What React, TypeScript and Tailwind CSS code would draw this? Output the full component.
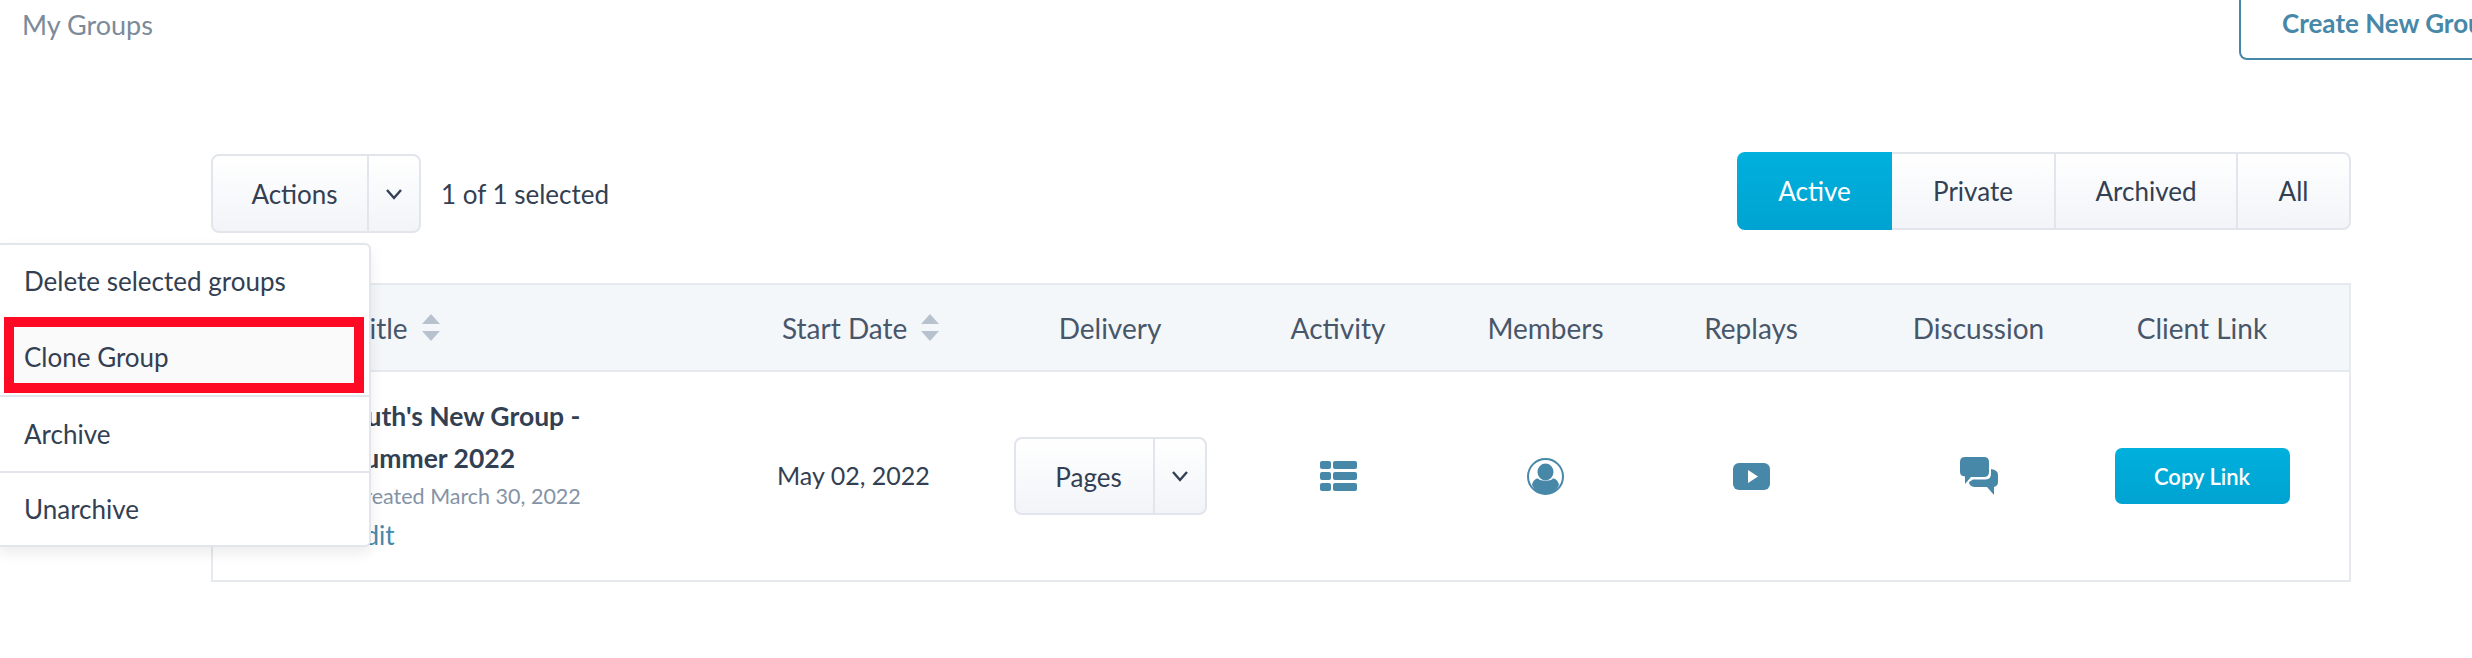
import React from "react";

const Chevron = () => (
  <svg width="18" height="12" viewBox="0 0 18 12" fill="none" stroke="#333f52" strokeWidth="2.4">
    <path d="M2 2 L9 10 L16 2" />
  </svg>
);

const Sort = () => (
  <svg width="18" height="27" viewBox="0 0 18 27" fill="#b8c2ce" className="ml-[14px]">
    <path d="M9 0 L18 10 L0 10 Z" />
    <path d="M0 17 L18 17 L9 27 Z" />
  </svg>
);

const SplitButton = ({ label, w, h, arrowW }: { label: string; w: number; h: number; arrowW: number }) => (
  <div
    className="flex rounded-[8px] border-2 border-[#e2e5eb] bg-gradient-to-b from-white to-[#f2f4f8] text-[#333f52]"
    style={{ width: w, height: h }}
  >
    <div className="flex flex-1 items-center justify-center pl-[9px] pt-0.5">{label}</div>
    <div className="flex items-center justify-center border-l-2 border-[#e2e5eb]" style={{ width: arrowW }}>
      <Chevron />
    </div>
  </div>
);

const head = "flex items-center justify-center";
const cell = "flex items-center justify-center";
const cols = "grid-cols-[547px_230px_240px_216px_199px_212px_243px_204px]";

export default function App() {
  return (
    <div className="h-[658px] w-[2472px] overflow-hidden bg-white text-[26px] text-[#333f52] [font-family:Lato,'Liberation_Sans',sans-serif]">
      <div className="flex h-[60px] items-start justify-between">
        <div className="pl-[22px] pt-[5px] text-[27px] text-[#7c8a9a]">My Groups</div>
        <div className="flex h-[60px] w-[233px] shrink-0 items-start overflow-hidden rounded-bl-[8px] border-b-2 border-l-2 border-[#4788a9] pl-[41px] pt-[4px] font-bold text-[#4788a9]">
          <span className="whitespace-nowrap">Create New Group</span>
        </div>
      </div>

      <div className="relative ml-[211px] mr-[121px] mt-[92px]">
        <div className="flex items-start justify-between">
          <div className="mt-[2px] flex items-center">
            <SplitButton label="Actions" w={210} h={79} arrowW={52} />
            <span className="ml-[20px] pt-[2px]">1 of 1 selected</span>
          </div>
          <div className="flex h-[78px] w-[614px]">
            <div className="flex w-[155px] items-center justify-center rounded-l-[8px] bg-gradient-to-b from-[#00b0dd] to-[#00a3d1] text-white">Active</div>
            <div className="flex w-[164px] items-center justify-center border-y-2 border-r-2 border-[#e2e5eb] bg-gradient-to-b from-white to-[#f2f4f8]">Private</div>
            <div className="flex w-[182px] items-center justify-center border-y-2 border-r-2 border-[#e2e5eb] bg-gradient-to-b from-white to-[#f2f4f8]">Archived</div>
            <div className="flex flex-1 items-center justify-center rounded-r-[8px] border-y-2 border-r-2 border-[#e2e5eb] bg-gradient-to-b from-white to-[#f2f4f8]">All</div>
          </div>
        </div>

        <div className="mt-[50px] h-[299px] border-2 border-[#e6e9ed]">
          <div className={`grid h-[87px] ${cols} border-b-2 border-[#e6e9ed] bg-[#f4f7fa] text-[28px] text-[#48566a]`}>
            <div className="flex items-center pl-[140px]">
              Title
              <Sort />
            </div>
            <div className="flex items-center pl-[22px]">
              Start Date
              <Sort />
            </div>
            <div className={head}>Delivery</div>
            <div className={head}>Activity</div>
            <div className={head}>Members</div>
            <div className={head}>Replays</div>
            <div className={head}>Discussion</div>
            <div className={head}>Client Link</div>
          </div>
          <div className={`grid h-[208px] ${cols}`}>
            <div className="flex flex-col pl-[137px] pt-[23px]">
              <div className="text-[26.5px] font-bold leading-[42px]">Ruth's New Group -</div>
              <div className="text-[26.5px] font-bold leading-[42px]">Summer 2022</div>
              <div className="text-[21.5px] leading-[35px] text-[#8593a6]">Created March 30, 2022</div>
              <div className="leading-[42px] text-[#4788a9]">Edit</div>
            </div>
            <div className="flex items-center pl-[17px] text-[25px]">May 02, 2022</div>
            <div className={cell}>
              <SplitButton label="Pages" w={193} h={78} arrowW={52} />
            </div>
            <div className={cell}>
              <svg width="37" height="30" viewBox="0 0 37 30" fill="#4788a9">
                <rect x="0" y="0" width="11" height="8" rx="2" />
                <rect x="13" y="0" width="24" height="8" rx="2" />
                <rect x="0" y="11" width="11" height="8" rx="2" />
                <rect x="13" y="11" width="24" height="8" rx="2" />
                <rect x="0" y="22" width="11" height="8" rx="2" />
                <rect x="13" y="22" width="24" height="8" rx="2" />
              </svg>
            </div>
            <div className={cell}>
              <svg width="37" height="37" viewBox="0 0 37 37">
                <circle cx="18.5" cy="18.5" r="17.5" fill="none" stroke="#4788a9" strokeWidth="2" />
                <ellipse cx="18.5" cy="14" rx="8" ry="8.5" fill="#4788a9" />
                <path d="M5 27 C6 22 9 20.5 11 20.5 C13 23.5 24 23.5 26 20.5 C28 20.5 31 22 32 27 C29 33.5 24 36 18.5 36 C13 36 8 33.5 5 27 Z" fill="#4788a9" />
              </svg>
            </div>
            <div className={cell}>
              <svg width="37" height="27" viewBox="0 0 37 27">
                <rect width="37" height="27" rx="6" fill="#4788a9" />
                <path d="M15 7 L25 13.5 L15 20 Z" fill="#fff" />
              </svg>
            </div>
            <div className={cell}>
              <svg width="38" height="38" viewBox="0 0 38 38" fill="#4788a9">
                <path d="M5 0 H24 Q29 0 29 5 V15 Q29 20 24 20 H11 L5 27 V19.5 Q0 19 0 15 V5 Q0 0 5 0 Z" />
                <path d="M31 12 Q38 13 38 18 V25 Q38 29 34 30 V38 L27 30 H14 Q9 29 9 25 L13 22.5 H26 Q31 22 31 17 Z" />
              </svg>
            </div>
            <div className={cell}>
              <div className="flex h-[56px] w-[175px] items-center justify-center rounded-[7px] bg-gradient-to-b from-[#00b0dd] to-[#00a3d1] text-[22px] font-semibold text-white">
                Copy Link
              </div>
            </div>
          </div>
        </div>

        <div className="absolute -left-[213px] top-[91px] w-[373px] rounded-r-[6px] border-2 border-[#e2e5eb] bg-white shadow-[0_6px_14px_rgba(0,0,0,0.08)]">
          <div className="flex h-[72px] items-center pl-[24px]">Delete selected groups</div>
          <div className="mb-[2px] ml-[4px] flex h-[76px] w-[360px] items-center border-[10px] border-[#ff0a24] bg-[#fafafa] pl-[10px] pt-[5px]">
            Clone Group
          </div>
          <div className="flex h-[76px] items-center border-t-2 border-[#e2e5eb] pl-[24px]">Archive</div>
          <div className="flex h-[74px] items-center border-t-2 border-[#e2e5eb] pl-[24px]">Unarchive</div>
        </div>
      </div>
    </div>
  );
}
